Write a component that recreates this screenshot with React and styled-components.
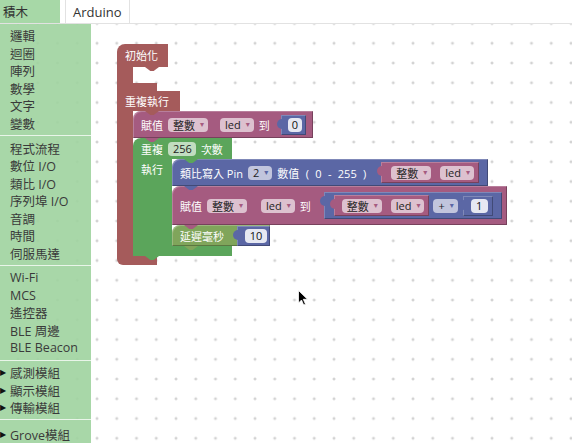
import React from "react";
import styled, { createGlobalStyle, css } from "styled-components";

const colors = {
  main: "#a55b5b",
  variable: "#a55b80",
  loop: "#5ba55b",
  io: "#5b67a5",
  time: "#80a55b",
  toolbox: "rgba(158, 211, 158, 0.9)",
};

const GlobalStyle = createGlobalStyle`
  html, body {
    margin: 0;
    padding: 0;
    background: #fff;
  }
  body {
    font-family: "Open Sans", "Noto Sans CJK TC", sans-serif;
    overflow: hidden;
  }
`;

const Page = styled.div`
  width: 572px;
  height: 443px;
  display: flex;
  flex-direction: column;
  overflow: hidden;
`;

const TabBar = styled.div`
  height: 23px;
  display: flex;
  border-bottom: 1px solid #e2e2e2;
`;

const Tab = styled.div`
  display: flex;
  align-items: center;
  box-sizing: border-box;
  width: ${({ $w }) => $w}px;
  padding-left: ${({ $pl }) => $pl}px;
  margin-left: ${({ $ml }) => $ml || 0}px;
  background: ${({ $active }) => ($active ? "#a7d8a7" : "#fff")};
  border-left: ${({ $active }) => ($active ? "none" : "1px solid #e2e2e2")};
  border-right: ${({ $active }) => ($active ? "none" : "1px solid #e2e2e2")};
  font-size: ${({ $fs }) => $fs}px;
  color: #333;
`;

const Main = styled.div`
  flex: 1;
  display: flex;
  position: relative;
`;

const Grid = styled.svg`
  position: absolute;
  inset: 0;
  width: 100%;
  height: 100%;
`;

const Sidebar = styled.nav`
  position: relative;
  width: 91px;
  padding-top: 3px;
  display: flex;
  flex-direction: column;
  background: ${colors.toolbox};
`;

const Item = styled.div`
  height: 17.5px;
  display: flex;
  align-items: center;
  padding-left: 10px;
  font-size: 12.5px;
  color: #3a3a3a;
  white-space: nowrap;
`;

const Caret = styled.span`
  width: 10px;
  margin-left: -10px;
  font-family: "DejaVu Sans", sans-serif;
  font-size: 8px;
  color: #111;
`;

const Separator = styled.div`
  height: 1px;
  margin: 3px 0 ${({ $mb }) => $mb || 3.25}px;
  background: rgba(255, 255, 255, 0.75);
`;

const Workspace = styled.div`
  flex: 1;
  position: relative;
`;

const Canvas = styled.div`
  position: absolute;
  left: 26px;
  top: 20px;
  font-family: "Open Sans", "Noto Sans CJK TC", sans-serif;
  font-size: 11px;
  color: #fff;
`;

const bump = (color, left) => css`
  &::after {
    content: "";
    position: absolute;
    left: ${left}px;
    top: 100%;
    width: 14px;
    height: 4px;
    background: ${color};
    clip-path: polygon(0 0, 100% 0, 62% 100%, 38% 100%);
    z-index: 2;
  }
`;

const edges = css`
  box-shadow: inset 1px 1px rgba(255, 255, 255, 0.22),
    inset -1px -1px rgba(0, 0, 0, 0.28);
`;

const CBlock = styled.div`
  display: flex;
  flex-direction: column;
  align-items: flex-start;
`;

const CHead = styled.div`
  position: relative;
  box-sizing: border-box;
  display: flex;
  align-items: center;
  gap: 5px;
  width: ${({ $w }) => $w}px;
  height: ${({ $h }) => $h}px;
  padding: 0 0 ${({ $pb }) => $pb || 0}px 8px;
  background: ${({ $c }) => $c};
  border-top-left-radius: ${({ $top }) => ($top ? 8 : 0)}px;
  white-space: nowrap;
  ${({ $c, $tab }) => bump($c, $tab)}
`;

const CRow = styled.div`
  display: flex;
  align-items: stretch;
`;

const CArm = styled.div`
  box-sizing: border-box;
  width: ${({ $w }) => $w}px;
  padding: 1px 0 0 8px;
  background: ${({ $c }) => $c};
  line-height: 20px;
`;

const Slot = styled.div`
  display: flex;
  flex-direction: column;
  align-items: flex-start;
  min-height: ${({ $h }) => $h || 0}px;
`;

const CFoot = styled.div`
  position: relative;
  width: ${({ $w }) => $w}px;
  height: ${({ $h }) => $h}px;
  background: ${({ $c }) => $c};
  border-bottom-left-radius: ${({ $round }) => ($round ? 6 : 0)}px;
  ${({ $c, $bump }) => $bump && bump($c, 12)}
`;

const Stmt = styled.div`
  position: relative;
  display: flex;
  align-items: center;
  gap: 5px;
  height: ${({ $h }) => $h}px;
  padding: 0 ${({ $pr }) => $pr ?? 7}px 0 8px;
  background: ${({ $c }) => $c};
  border-top-left-radius: 8px;
  white-space: nowrap;
  ${edges}
  ${({ $c }) => bump($c, 12)}
`;

const Label = styled.span`
  word-spacing: ${({ $ws }) => $ws || 0}px;
`;

const Drop = styled.span`
  display: inline-flex;
  align-items: center;
  height: 14px;
  padding: 0 ${({ $pr }) => $pr ?? 4}px 0 5px;
  margin-left: ${({ $ml }) => $ml || 0}px;
  border-radius: 4px;
  background: ${({ $bg }) => $bg};
  color: #1e1e1e;
`;

const Arrow = styled.span`
  margin-left: 5px;
  font-family: "DejaVu Sans", sans-serif;
  font-size: 8px;
  color: ${({ $c }) => $c};
`;

const Reporter = styled.span`
  position: relative;
  display: inline-flex;
  align-items: center;
  gap: ${({ $gap }) => $gap || 0}px;
  height: ${({ $h }) => $h}px;
  padding: 0 ${({ $pr }) => $pr}px 0 ${({ $pl }) => $pl}px;
  margin-left: ${({ $ml }) => $ml || 0}px;
  background: ${({ $c }) => $c};
  ${edges}
  &::before {
    content: "";
    position: absolute;
    left: -4px;
    top: 4px;
    width: 5px;
    height: 10px;
    border-radius: 5px 0 0 5px;
    background: ${({ $c }) => $c};
  }
`;

const NumField = styled.span`
  box-sizing: border-box;
  display: inline-flex;
  align-items: center;
  justify-content: center;
  min-width: ${({ $w }) => $w || 0}px;
  height: 14px;
  padding: 0 4px;
  border-radius: 4px;
  background: rgba(255, 255, 255, 0.85);
  color: #111;
`;

const Cursor = styled.svg`
  position: absolute;
  left: 207px;
  top: 266px;
`;

const toolbox = [
  ["邏輯", "迴圈", "陣列", "數學", "文字", "變數"],
  ["程式流程", "數位 I/O", "類比 I/O", "序列埠 I/O", "音調", "時間", "伺服馬達"],
  ["Wi-Fi", "MCS", "遙控器", "BLE 周邊", "BLE Beacon"],
  ["▶感測模組", "▶顯示模組", "▶傳輸模組"],
  ["▶Grove模組"],
];

const pill = (c) => `color-mix(in srgb, ${c} 38%, #fff)`;

const Dropdown = ({ c, children, ml }) => (
  <Drop $bg={pill(c)} $ml={ml}>
    {children}
    <Arrow $c={c}>▾</Arrow>
  </Drop>
);

const Getter = ({ ml, pl = 8 }) => (
  <Reporter $c={colors.variable} $h={21} $pl={pl} $pr={5} $gap={9} $ml={ml}>
    <Dropdown c={colors.variable}>整數</Dropdown>
    <Dropdown c={colors.variable}>led</Dropdown>
  </Reporter>
);

const Number = ({ value, ml, pl = 7, pr = 4, w }) => (
  <Reporter $c={colors.io} $h={20} $pl={pl} $pr={pr} $ml={ml}>
    <NumField $w={w}>{value}</NumField>
  </Reporter>
);

const App = () => (
  <Page>
    <GlobalStyle />
    <TabBar>
      <Tab $active $w={60} $pl={3} $fs={12.5}>
        積木
      </Tab>
      <Tab $w={65} $pl={7} $ml={5} $fs={13}>
        Arduino
      </Tab>
    </TabBar>
    <Main>
      <Grid>
        <defs>
          <pattern
            id="dots"
            width="19.75"
            height="19.75"
            x="8.1"
            y="9.4"
            patternUnits="userSpaceOnUse"
          >
            <path d="M8.4 9.9h3M9.9 8.4v3" stroke="#c4c4c4" strokeWidth="1" />
          </pattern>
        </defs>
        <rect width="100%" height="100%" fill="url(#dots)" />
      </Grid>
      <Sidebar>
        {toolbox.map((group, gi) => (
          <React.Fragment key={gi}>
            {gi > 0 && <Separator $mb={gi === 4 ? 5 : 3.25} />}
            {group.map((name) => (
              <Item key={name}>
                {name.startsWith("▶") && <Caret>▶</Caret>}
                {name.replace("▶", "")}
              </Item>
            ))}
          </React.Fragment>
        ))}
      </Sidebar>
      <Workspace>
        <Canvas>
          <CBlock>
            <CHead $c={colors.main} $w={51} $h={23} $pb={2} $top $tab={28}>
              初始化
            </CHead>
            <CRow>
              <CArm $c={colors.main} $w={16} />
              <Slot $h={16} />
            </CRow>
            <CFoot $c={colors.main} $w={40} $h={8} />
            <CHead $c={colors.main} $w={63} $h={20} $tab={28}>
              重複執行
            </CHead>
            <CRow>
              <CArm $c={colors.main} $w={16} />
              <Slot>
                <Stmt $c={colors.variable} $h={27}>
                  賦值
                  <Dropdown c={colors.variable}>整數</Dropdown>
                  <Dropdown c={colors.variable} ml={7}>
                    led
                  </Dropdown>
                  到
                  <Number value="0" ml={6} w={14} />
                </Stmt>
                <CBlock>
                  <CHead $c={colors.loop} $w={99} $h={21} $top $tab={51}>
                    重複
                    <Drop $bg={pill(colors.loop)}>256</Drop>
                    次數
                  </CHead>
                  <CRow>
                    <CArm $c={colors.loop} $w={39}>
                      執行
                    </CArm>
                    <Slot>
                      <Stmt $c={colors.io} $h={27} $pr={9}>
                        類比寫入 Pin
                        <Dropdown c={colors.io}>2</Dropdown>
                        <Label $ws={3.5}>數值 ( 0 - 255 )</Label>
                        <Getter ml={10} pl={10} />
                      </Stmt>
                      <Stmt $c={colors.variable} $h={39} $pr={5}>
                        賦值
                        <Dropdown c={colors.variable}>整數</Dropdown>
                        <Dropdown c={colors.variable} ml={9}>
                          led
                        </Dropdown>
                        到
                        <Reporter $c={colors.io} $h={27} $pl={10} $pr={9} $gap={4} $ml={8}>
                          <Getter />
                          <Dropdown c={colors.io}>+</Dropdown>
                          <Number value="1" pl={8} pr={5} w={17} ml={1} />
                        </Reporter>
                      </Stmt>
                      <Stmt $c={colors.time} $h={21} $pr={0}>
                        延遲毫秒
                        <Number value="10" pl={8} pr={3} w={22} ml={8} />
                      </Stmt>
                    </Slot>
                  </CRow>
                  <CFoot $c={colors.loop} $w={99} $h={10} $bump />
                </CBlock>
              </Slot>
            </CRow>
            <CFoot $c={colors.main} $w={40} $h={9} $round />
          </CBlock>
        </Canvas>
        <Cursor width="10" height="16" viewBox="0 0 10 16">
          <path
            d="M0.5 0.5v12.5l3-3 2.2 5 1.8-0.8-2.2-4.9h4.2z"
            fill="#000"
            stroke="#fff"
            strokeWidth="0.8"
          />
        </Cursor>
      </Workspace>
    </Main>
  </Page>
);

export default App;
